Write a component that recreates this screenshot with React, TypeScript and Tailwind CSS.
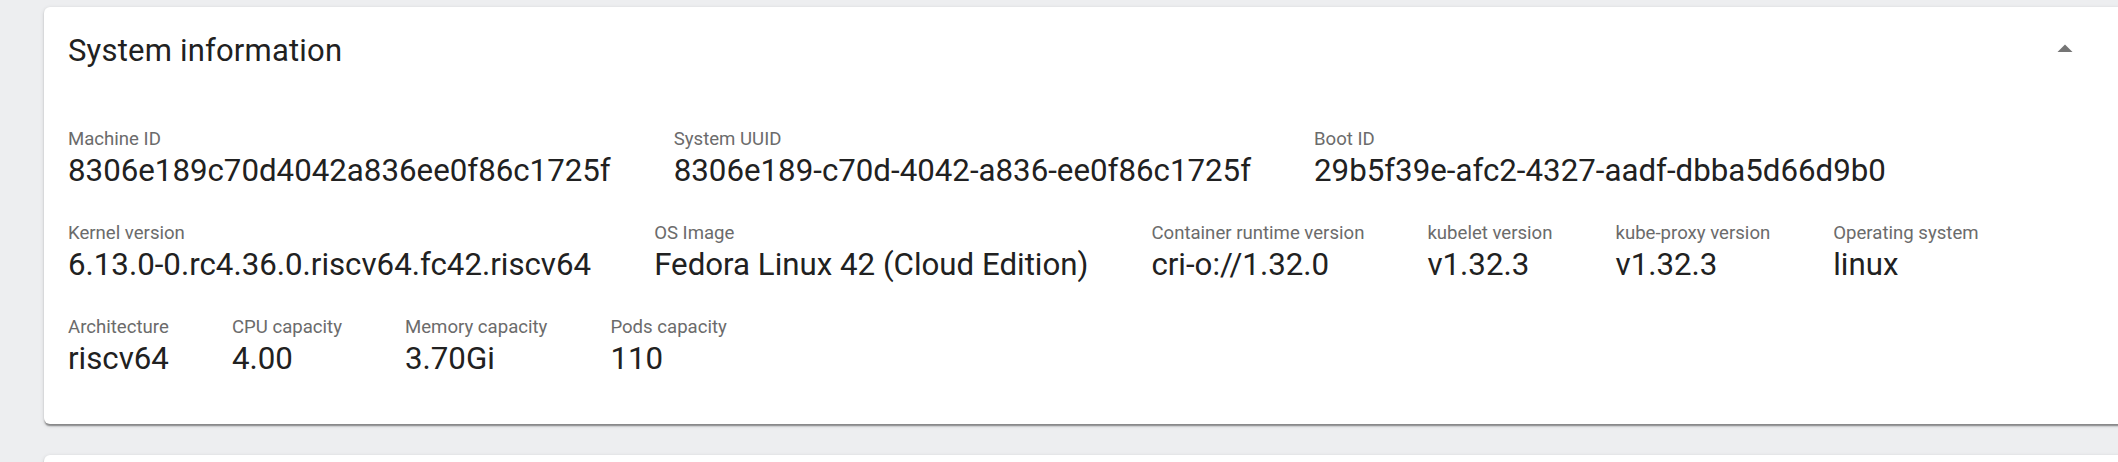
import React from "react";

type Item = { label: string; value: string };

const rows: Item[][] = [
  [
    { label: "Machine ID", value: "8306e189c70d4042a836ee0f86c1725f" },
    { label: "System UUID", value: "8306e189-c70d-4042-a836-ee0f86c1725f" },
    { label: "Boot ID", value: "29b5f39e-afc2-4327-aadf-dbba5d66d9b0" },
  ],
  [
    { label: "Kernel version", value: "6.13.0-0.rc4.36.0.riscv64.fc42.riscv64" },
    { label: "OS Image", value: "Fedora Linux 42 (Cloud Edition)" },
    { label: "Container runtime version", value: "cri-o://1.32.0" },
    { label: "kubelet version", value: "v1.32.3" },
    { label: "kube-proxy version", value: "v1.32.3" },
    { label: "Operating system", value: "linux" },
  ],
  [
    { label: "Architecture", value: "riscv64" },
    { label: "CPU capacity", value: "4.00" },
    { label: "Memory capacity", value: "3.70Gi" },
    { label: "Pods capacity", value: "110" },
  ],
];

function Field({ label, value }: Item) {
  return (
    <div className="flex flex-col">
      <span className="text-[18.6px] leading-[27px] text-[#6b6b6b] whitespace-nowrap">{label}</span>
      <span className="text-[31.25px] leading-[36px] text-[#212121] whitespace-nowrap">{value}</span>
    </div>
  );
}

export default function App() {
  return (
    <div
      className="w-[2118px] h-[462px] overflow-hidden bg-[#edeef0]"
      style={{ fontFamily: "Roboto, 'Noto Sans', sans-serif" }}
    >
      <div className="flex flex-col gap-[31px] pl-[44px] pt-[7px]">
        <section className="w-[2082px] shrink-0 rounded-[6px] bg-white shadow-[0_3px_1.5px_-1.5px_rgba(0,0,0,0.25),0_1.5px_1.5px_0_rgba(0,0,0,0.16),0_1.5px_4.5px_0_rgba(0,0,0,0.12)]">
          <header className="flex h-[84px] items-center justify-between pt-[3px] pl-[24px] pr-[43px]">
            <h2 className="text-[31px] leading-[36px] font-normal text-[#212121] tracking-[0.2px]">
              System information
            </h2>
            <div className="-mt-[3px] flex h-[36px] w-[36px] items-center justify-center">
              <svg viewBox="0 0 24 24" width="36" height="36" fill="#757575">
                <path d="m7 14 5-5 5 5z" />
              </svg>
            </div>
          </header>
          <div className="flex flex-col gap-[31px] px-[24px] pt-[35px] pb-[47px]">
            {rows.map((row, i) => (
              <div key={i} className="flex gap-[63px]">
                {row.map((it) => (
                  <Field key={it.label} {...it} />
                ))}
              </div>
            ))}
          </div>
        </section>
        <section className="h-[200px] w-[2082px] shrink-0 rounded-[6px] bg-white shadow-[0_3px_1.5px_-1.5px_rgba(0,0,0,0.25),0_1.5px_1.5px_0_rgba(0,0,0,0.16),0_1.5px_4.5px_0_rgba(0,0,0,0.12)]" />
      </div>
    </div>
  );
}
